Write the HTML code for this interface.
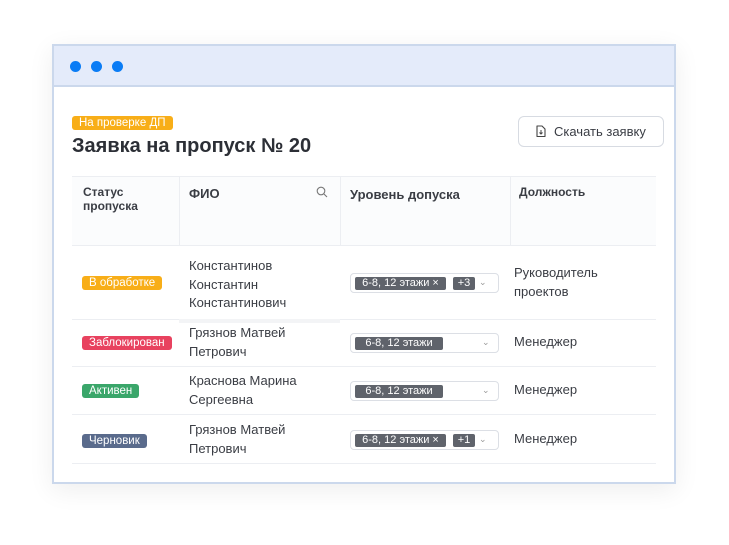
<!DOCTYPE html>
<html><head><meta charset="utf-8"><style>
*{margin:0;padding:0;box-sizing:border-box}
body{width:729px;height:545px;background:#fff;font-family:"Liberation Sans","DejaVu Sans",sans-serif;position:relative;overflow:hidden;color:#333}
.win{position:absolute;left:52px;top:44px;width:624px;height:440px;border:2px solid #cbd8ec;background:#fff;box-shadow:0 6px 24px rgba(0,0,0,0.07)}
.bar{position:absolute;left:0;top:0;right:0;height:41px;background:#e4ebfa;border-bottom:2px solid #cbd8ec}
.dot{position:absolute;top:15px;width:11px;height:11px;border-radius:50%;background:#0a7cf5}
.a{position:absolute;white-space:nowrap}
.tag{position:absolute;height:14px;line-height:14px;font-size:11.5px;color:#fff;padding:0 7px;border-radius:3px;white-space:nowrap}
.h{font-size:13px;font-weight:bold;color:#3a3d44}
.t{font-size:13px;color:#3a3d44;line-height:18.5px}
.hl{position:absolute;height:1px;background:#eceef2;left:72px;width:584px}
.vl{position:absolute;width:1px;background:#eceef2;top:177px;height:68px}
.sel{position:absolute;left:350px;width:149px;height:20px;border:1px solid #dcdfe5;border-radius:4px;background:#fff}
.chip{position:absolute;top:3px;height:13px;line-height:13px;font-size:11px;color:#fff;background:#5f636b;border-radius:2px;white-space:nowrap;text-align:center}
.chev{position:absolute;top:3px;font-size:9px;color:#999}
</style></head><body>
<div class="win">
<div class="bar"><div class="dot" style="left:16px"></div><div class="dot" style="left:37px"></div><div class="dot" style="left:58px"></div></div>
</div>
<div class="tag" style="left:72px;top:116px;background:#f8ae18">На проверке ДП</div>
<div class="a" style="left:72px;top:135px;font-size:20px;font-weight:bold;color:#2c2f36">Заявка на пропуск № 20</div>
<div class="a" style="left:518px;top:116px;width:146px;height:31px;border:1px solid #d7dbe2;border-radius:6px;font-size:13px;color:#3a3d44;line-height:29px;padding-left:35px">Скачать заявку
<svg style="position:absolute;left:16px;top:8px" width="12" height="13" viewBox="0 0 12 13"><path d="M2 1h5l3 3v7.5H2z" fill="none" stroke="#444" stroke-width="1.1" stroke-linejoin="round"/><path d="M6 5v4M4.5 7.5L6 9l1.5-1.5" fill="none" stroke="#444" stroke-width="1"/></svg></div>
<div class="a" style="left:72px;top:177px;width:584px;height:68px;background:#fbfcfd"></div>
<div class="hl" style="top:176px"></div>
<div class="vl" style="left:179px"></div><div class="vl" style="left:340px"></div><div class="vl" style="left:510px"></div>
<div class="a h" style="left:83px;top:185px;font-size:12px;line-height:14px">Статус<br>пропуска</div>
<div class="a h" style="left:189px;top:186px">ФИО</div>
<svg class="a" style="left:316px;top:186px" width="12" height="12" viewBox="0 0 12 12"><circle cx="5" cy="5" r="3.8" fill="none" stroke="#777" stroke-width="1.1"/><path d="M8 8l3 3" stroke="#777" stroke-width="1.1"/></svg>
<div class="a h" style="left:350px;top:187px">Уровень допуска</div>
<div class="a h" style="left:519px;top:185px;font-size:12px">Должность</div>
<div class="hl" style="top:245px"></div>
<div class="hl" style="top:319px"></div>
<div class="a" style="left:179px;top:319px;width:161px;height:4px;background:#f3f4f6"></div>
<div class="hl" style="top:366px"></div>
<div class="hl" style="top:414px"></div>
<div class="hl" style="top:463px"></div>

<div class="tag" style="left:82px;top:276px;background:#f8ae18">В обработке</div>
<div class="a t" style="left:189px;top:257px">Константинов<br>Константин<br>Константинович</div>
<div class="sel" style="top:273px"><div class="chip" style="left:4px;width:91px">6-8, 12 этажи ×</div><div class="chip" style="left:102px;width:22px">+3</div><div class="chev" style="left:128px">⌄</div></div>
<div class="a t" style="left:514px;top:264px">Руководитель<br>проектов</div>

<div class="tag" style="left:82px;top:336px;background:#e8425f">Заблокирован</div>
<div class="a t" style="left:189px;top:324px">Грязнов Матвей<br>Петрович</div>
<div class="sel" style="top:333px"><div class="chip" style="left:4px;width:88px">6-8, 12 этажи</div><div class="chev" style="left:131px">⌄</div></div>
<div class="a t" style="left:514px;top:333px">Менеджер</div>

<div class="tag" style="left:82px;top:384px;background:#3aa66a">Активен</div>
<div class="a t" style="left:189px;top:372px">Краснова Марина<br>Сергеевна</div>
<div class="sel" style="top:381px"><div class="chip" style="left:4px;width:88px">6-8, 12 этажи</div><div class="chev" style="left:131px">⌄</div></div>
<div class="a t" style="left:514px;top:381px">Менеджер</div>

<div class="tag" style="left:82px;top:434px;background:#5a6b8c">Черновик</div>
<div class="a t" style="left:189px;top:421px">Грязнов Матвей<br>Петрович</div>
<div class="sel" style="top:430px"><div class="chip" style="left:4px;width:91px">6-8, 12 этажи ×</div><div class="chip" style="left:102px;width:22px">+1</div><div class="chev" style="left:128px">⌄</div></div>
<div class="a t" style="left:514px;top:430px">Менеджер</div>
</body></html>
